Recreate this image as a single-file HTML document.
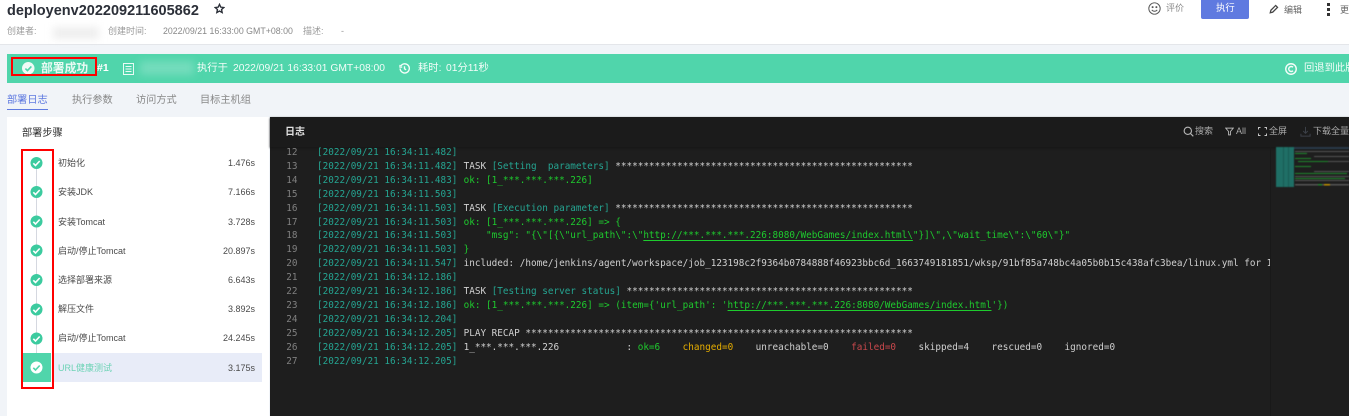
<!DOCTYPE html>
<html lang="zh-CN"><head><meta charset="utf-8"><title>deployenv</title>
<style>
*{box-sizing:border-box}
html,body{margin:0;padding:0;width:1349px;height:416px;overflow:hidden;background:#f1f4f8}
body{position:relative;font-family:"Liberation Sans","Noto Sans CJK SC",sans-serif;font-size:9px;color:#666}
#w{position:absolute;left:0;top:0;width:1349px;height:416px;filter:blur(.3px)}
.a{position:absolute;white-space:pre;line-height:14px}
.blur{position:absolute;filter:blur(4px)}
.box{position:absolute;border:2px solid #f00}
.step{position:absolute;left:58px;width:197px;height:14px;line-height:14px;font-size:9px;color:#4a4a4a}
.step b{position:absolute;right:0;top:0;font-weight:normal;color:#4a4a4a}
.log{position:absolute;left:270px;margin-top:1px;white-space:pre;font-family:"DejaVu Sans Mono","Liberation Mono",monospace;font-size:9.33px;line-height:14px;color:#d0d0d0;height:14px}
.n{position:absolute;left:0;width:27.5px;text-align:right;color:#808080}
.t{position:absolute;left:47px;color:#25a592}
.c{position:absolute;left:193.6px}
.g{color:#1ecb2e}.u{text-decoration:underline;text-underline-offset:2px}.y{color:#e5ad00}.r{color:#c8484c}.tt{color:#25a592}
.w{color:#f4fdf9;font-size:10.3px}
</style></head><body>
<div id="w">
<div style="position:absolute;left:0;top:0;width:1349px;height:44.5px;background:#fff;border-bottom:1px solid #e4e6ea"></div>
<div class="a" style="left:7px;top:1px;line-height:20px;font-size:14.5px;font-weight:bold;color:#2b2f38">deployenv202209211605862</div>
<svg style="position:absolute;left:214px;top:3px" width="11" height="11" viewBox="0 0 24 24"><path d="M12 3l2.8 6 6.6.8-4.9 4.500 1.300 6.500L12 17.500 6.200 20.800l1.300-6.500L2.600 9.800 9.200 9z" fill="none" stroke="#2b2f38" stroke-width="3"/></svg>
<div class="a" style="left:7px;top:24px;color:#999">创建者:</div>
<div class="blur" style="left:53px;top:27px;width:46px;height:12px;background:#eee"></div>
<div class="a" style="left:108px;top:24px;color:#999">创建时间:</div>
<div class="a" style="left:163px;top:24px;color:#888;font-size:8.8px">2022/09/21 16:33:00 GMT+08:00</div>
<div class="a" style="left:303px;top:24px;color:#999">描述:</div>
<div class="a" style="left:341px;top:24px;color:#999">-</div>
<svg style="position:absolute;left:1148px;top:2px" width="13" height="13" viewBox="0 0 24 24" fill="none" stroke="#555" stroke-width="1.800"><circle cx="12" cy="12" r="10.500"/><circle cx="8.500" cy="9.500" r="1" fill="#555"/><circle cx="15.500" cy="9.500" r="1" fill="#555"/><path d="M7 14.500c2.500 3.500 7.500 3.500 10 0"/></svg>
<div class="a" style="left:1166px;top:1px;color:#888">评价</div>
<div style="position:absolute;left:1201px;top:0;width:48px;height:18.500px;background:#5f7ae0;border-radius:0 0 2px 2px"></div>
<div class="a" style="left:1216px;top:1px;color:#fff;font-size:9.400px">执行</div>
<svg style="position:absolute;left:1269px;top:4px" width="10" height="10" viewBox="0 0 24 24"><path d="M3 21l1.500-6L16 3.500l4.500 4.500L9 19.500z" fill="none" stroke="#444" stroke-width="3"/></svg>
<div class="a" style="left:1284px;top:3px;color:#666">编辑</div>
<div style="position:absolute;left:1327px;top:3px;width:2.500px;height:2.500px;background:#333"></div>
<div style="position:absolute;left:1327px;top:8px;width:2.500px;height:2.500px;background:#333"></div>
<div style="position:absolute;left:1327px;top:13px;width:2.500px;height:2.500px;background:#333"></div>
<div class="a" style="left:1340px;top:3px;color:#666">更</div>

<div style="position:absolute;left:7px;top:54px;width:1342px;height:29px;background:#50d5ab"></div>
<svg style="position:absolute;left:22px;top:62px" width="12.500" height="12.500" viewBox="0 0 24 24"><circle cx="12" cy="12" r="12" fill="#f0fbf7"/><path d="M6.500 12.500l4 4 7.500-8" fill="none" stroke="#50d5ab" stroke-width="3"/></svg>
<div class="a" style="left:41px;top:61px;font-size:11.800px;font-weight:bold;color:#eafaf4">部署成功</div>
<div class="a" style="left:97px;top:61px;font-size:10.500px;font-weight:bold;color:#fff">#1</div>
<svg style="position:absolute;left:123px;top:62.500px" width="11" height="12" viewBox="0 0 11 12" fill="none" stroke="#eafaf4"><rect x=".5" y=".5" width="10" height="11"/><path d="M2.500 3.500h6M2.500 6h6M2.500 8.500h6"/></svg>
<div class="blur" style="left:140px;top:61px;width:54px;height:14px;background:#74dcbc"></div>
<div class="a w" style="left:197px;top:62px">执行于</div>
<div class="a w" style="left:233px;top:62px">2022/09/21 16:33:01 GMT+08:00</div>
<svg style="position:absolute;left:399px;top:63px" width="11" height="11" viewBox="0 0 24 24" fill="none" stroke="#f4fdf9" stroke-width="3"><path d="M4 6.500A10 10 0 1 1 2.500 12"/><path d="M12 7v5.500l3.500 2.500"/><path d="M2 4v5h5" stroke-width="2.500"/></svg>
<div class="a w" style="left:418px;top:62px">耗时:</div>
<div class="a w" style="left:446px;top:62px">01分11秒</div>
<svg style="position:absolute;left:1285px;top:63px" width="12" height="12" viewBox="0 0 24 24" fill="none" stroke="#f4fdf9" stroke-width="2.800"><circle cx="12" cy="12" r="10.500"/><path d="M16 8.500a5 5 0 1 0 0 7"/></svg>
<div class="a w" style="left:1304px;top:62px">回退到此版本</div>

<div class="a" style="left:7px;top:93.500px;font-size:10.200px;color:#5f7ae0">部署日志</div>
<div class="a" style="left:72px;top:93.500px;font-size:10.200px;color:#888">执行参数</div>
<div class="a" style="left:136px;top:93.500px;font-size:10.200px;color:#888">访问方式</div>
<div class="a" style="left:200px;top:93.500px;font-size:10.200px;color:#888">目标主机组</div>
<div style="position:absolute;left:7px;top:108.500px;width:41px;height:1.500px;background:#5f7ae0"></div>

<div style="position:absolute;left:7px;top:117px;width:262px;height:299px;background:#fff"></div>
<div class="a" style="left:22px;top:127px;font-size:10.200px;color:#333">部署步骤</div>
<div style="position:absolute;left:36px;top:163px;width:1px;height:195px;background:#d5d8e0"></div>
<div style="position:absolute;left:54px;top:353px;width:208px;height:29px;background:#e8ecf8"></div>
<div style="position:absolute;left:23px;top:353px;width:28px;height:29px;background:#50d5ab"></div>
<svg style="position:absolute;left:0;top:0" width="60" height="390" viewBox="0 0 60 390">
<defs><g id="ck"><circle r="6" fill="#3ccb9f"/><path d="M-3.200.3l2.200 2.200 4.200-4.500" fill="none" stroke="#fff" stroke-width="1.600"/></g>
<g id="ck2"><circle r="6" fill="#fff"/><path d="M-3.200.3l2.200 2.200 4.200-4.500" fill="none" stroke="#50d5ab" stroke-width="1.600"/></g></defs>
<use href="#ck" x="36.500" y="163"/><use href="#ck" x="36.500" y="192"/><use href="#ck" x="36.500" y="221.500"/><use href="#ck" x="36.500" y="250.500"/><use href="#ck" x="36.500" y="280"/><use href="#ck" x="36.500" y="309.500"/><use href="#ck" x="36.500" y="338.500"/><use href="#ck2" x="36.500" y="367.500"/>
</svg>
<div class="step" style="top:156px">初始化<b>1.476s</b></div>
<div class="step" style="top:185px">安装JDK<b>7.166s</b></div>
<div class="step" style="top:214.500px">安装Tomcat<b>3.728s</b></div>
<div class="step" style="top:243.500px">启动/停止Tomcat<b>20.897s</b></div>
<div class="step" style="top:273px">选择部署来源<b>6.643s</b></div>
<div class="step" style="top:302px">解压文件<b>3.892s</b></div>
<div class="step" style="top:331px">启动/停止Tomcat<b>24.245s</b></div>
<div class="step" style="top:360.500px;color:#6ed3b6">URL健康测试<b>3.175s</b></div>

<div style="position:absolute;left:270px;top:117px;width:1079px;height:299px;background:#1e1e1e"></div>
<div style="position:absolute;left:270px;top:117px;width:1079px;height:30px;background:#1b1b1b;box-shadow:0 1px 2px #151515"></div>
<div style="position:absolute;left:1270px;top:147px;width:1px;height:269px;background:#191919"></div>
<div class="a" style="left:285px;top:126px;font-size:10px;font-weight:bold;color:#e2e2e2">日志</div>
<svg style="position:absolute;left:1183px;top:126px" width="11" height="11" viewBox="0 0 24 24" fill="none" stroke="#b5b5b5" stroke-width="2.500"><circle cx="10.500" cy="10.500" r="8"/><path d="M16.500 16.500l6 6"/></svg>
<div class="a" style="left:1195px;top:124px;color:#aaa">搜索</div>
<svg style="position:absolute;left:1225px;top:127px" width="9" height="9" viewBox="0 0 24 24" fill="none" stroke="#b5b5b5" stroke-width="2.500"><path d="M2 3h20l-7.500 9v9h-5v-9z"/></svg>
<div class="a" style="left:1236px;top:124px;color:#aaa">All</div>
<svg style="position:absolute;left:1258px;top:127px" width="9" height="9" viewBox="0 0 9 9" fill="none" stroke="#c5c5c5" stroke-width="1"><path d="M.5 2.500v-2h2M6.500.5h2v2M8.500 6.500v2h-2M2.500 8.500h-2v-2"/></svg>
<div class="a" style="left:1269px;top:124px;color:#aaa">全屏</div>
<svg style="position:absolute;left:1300px;top:126px" width="11" height="11" viewBox="0 0 24 24" fill="none" stroke="#3c4048" stroke-width="2.200"><path d="M12 2v14M7 11l5 5 5-5M2 17v5h20v-5"/></svg>
<div class="a" style="left:1313px;top:124px;color:#aaa">下载全量日志</div>

<svg style="position:absolute;left:1276px;top:147px;filter:blur(.5px)" width="73" height="40" viewBox="0 0 73 40">
<rect width="18" height="40" fill="#1f6f66"/><rect x="7" width="1" height="40" fill="#195a53"/><rect x="12" width="1" height="40" fill="#195a53"/>
<rect x="18" width="55" height="2" fill="#2a3a4a"/>
<g fill="#555"><rect x="19" y="4" width="54" height="1"/><rect x="38" y="9" width="35" height="1"/><rect x="38" y="14" width="35" height="1"/><rect x="38" y="24" width="35" height="1"/><rect x="19" y="29" width="54" height="1"/><rect x="19" y="33" width="54" height="1"/><rect x="19" y="37" width="54" height="1.500"/></g>
<g fill="#1f8a2c"><rect x="19" y="6" width="12" height="1"/><rect x="19" y="11" width="16" height="1"/><rect x="22" y="14" width="30" height="1"/><rect x="19" y="19" width="16" height="1"/><rect x="19" y="26" width="52" height="1"/><rect x="19" y="31" width="50" height="1"/><rect x="42" y="37" width="4" height="1.500"/></g>
<rect x="48" y="37" width="6" height="1.500" fill="#c09000"/>
</svg>

<div class="log" style="top:145px"><span class="n">12</span><span class="t">[2022/09/21 16:34:11.482]</span></div>
<div class="log" style="top:158.900px"><span class="n">13</span><span class="t">[2022/09/21 16:34:11.482]</span><span class="c">TASK <span class="tt">[Setting  parameters]</span> *****************************************************</span></div>
<div class="log" style="top:172.800px"><span class="n">14</span><span class="t">[2022/09/21 16:34:11.483]</span><span class="c g">ok: [1_***.***.***.226]</span></div>
<div class="log" style="top:186.700px"><span class="n">15</span><span class="t">[2022/09/21 16:34:11.503]</span></div>
<div class="log" style="top:200.600px"><span class="n">16</span><span class="t">[2022/09/21 16:34:11.503]</span><span class="c">TASK <span class="tt">[Execution parameter]</span> *****************************************************</span></div>
<div class="log" style="top:214.500px"><span class="n">17</span><span class="t">[2022/09/21 16:34:11.503]</span><span class="c g">ok: [1_***.***.***.226] =&gt; {</span></div>
<div class="log" style="top:228.400px"><span class="n">18</span><span class="t">[2022/09/21 16:34:11.503]</span><span class="c g">    "msg": "{\"[{\"url_path\":\"<span class="u">http://***.***.***.226:8080/WebGames/index.html\</span>"}]\",\"wait_time\":\"60\"}"</span></div>
<div class="log" style="top:242.300px"><span class="n">19</span><span class="t">[2022/09/21 16:34:11.503]</span><span class="c g">}</span></div>
<div class="log" style="top:256.200px;width:1000px;overflow:hidden"><span class="n">20</span><span class="t">[2022/09/21 16:34:11.547]</span><span class="c">included: /home/jenkins/agent/workspace/job_123198c2f9364b0784888f46923bbc6d_1663749181851/wksp/91bf85a748bc4a05b0b15c438afc3bea/linux.yml for 1</span></div>
<div class="log" style="top:270.100px"><span class="n">21</span><span class="t">[2022/09/21 16:34:12.186]</span></div>
<div class="log" style="top:284px"><span class="n">22</span><span class="t">[2022/09/21 16:34:12.186]</span><span class="c">TASK <span class="tt">[Testing server status]</span> ***************************************************</span></div>
<div class="log" style="top:297.900px"><span class="n">23</span><span class="t">[2022/09/21 16:34:12.186]</span><span class="c g">ok: [1_***.***.***.226] =&gt; (item={'url_path': '<span class="u">http://***.***.***.226:8080/WebGames/index.html</span>'})</span></div>
<div class="log" style="top:311.800px"><span class="n">24</span><span class="t">[2022/09/21 16:34:12.204]</span></div>
<div class="log" style="top:325.700px"><span class="n">25</span><span class="t">[2022/09/21 16:34:12.205]</span><span class="c">PLAY RECAP *********************************************************************</span></div>
<div class="log" style="top:339.600px"><span class="n">26</span><span class="t">[2022/09/21 16:34:12.205]</span><span class="c">1_***.***.***.226            : <span class="g">ok=6</span>    <span class="y">changed=0</span>    unreachable=0    <span class="r">failed=0</span>    skipped=4    rescued=0    ignored=0</span></div>
<div class="log" style="top:353.500px"><span class="n">27</span><span class="t">[2022/09/21 16:34:12.205]</span></div>
</div>
<div class="box" style="left:11px;top:57px;width:86px;height:19px"></div>
<div class="box" style="left:21px;top:149px;width:33px;height:240px"></div>
</body></html>
